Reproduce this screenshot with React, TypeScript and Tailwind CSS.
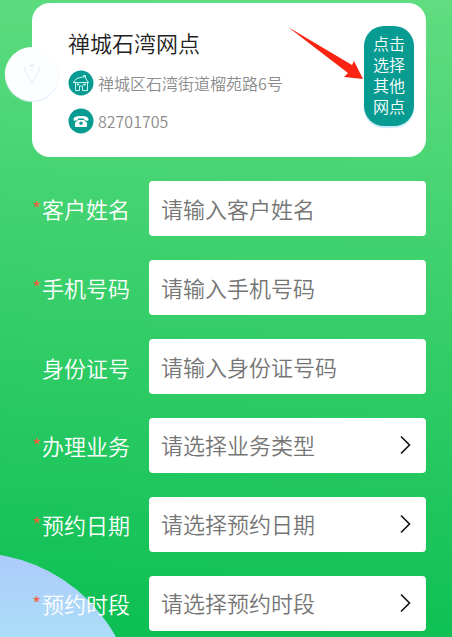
import React from 'react';

interface Field {
  id: string;
  label: string;
  placeholder: string;
  required: boolean;
  kind: 'text' | 'select';
}

const fields: Field[] = [
  { id: 'name', label: '客户姓名', placeholder: '请输入客户姓名', required: true, kind: 'text' },
  { id: 'phone', label: '手机号码', placeholder: '请输入手机号码', required: true, kind: 'text' },
  { id: 'idcard', label: '身份证号', placeholder: '请输入身份证号码', required: false, kind: 'text' },
  { id: 'business', label: '办理业务', placeholder: '请选择业务类型', required: true, kind: 'select' },
  { id: 'date', label: '预约日期', placeholder: '请选择预约日期', required: true, kind: 'select' },
  { id: 'period', label: '预约时段', placeholder: '请选择预约时段', required: true, kind: 'select' },
];

const HouseIcon: React.FC = () => (
  <svg viewBox="0 0 26 26" className="h-[26px] w-[26px] shrink-0" fill="none" aria-hidden="true">
    <circle cx="13" cy="13" r="12.5" fill="#079b91" />
    <g stroke="#c9f5ee" strokeWidth="1" strokeLinejoin="round" strokeLinecap="round">
      <path d="M5.5 12.5 8.500 8.500 16.500 6.500 20.500 12.500H5.500M15.500 6.500V5.500H17.500V7.500" />
      <path d="M7.500 12.500V20.500H11.500V16H14.500V20.500H19.500V12.500" />
      <path d="M9.500 14.500H10.500M16 14.500H17" strokeWidth="1.800" />
    </g>
  </svg>
);

const PhoneIcon: React.FC = () => (
  <svg viewBox="0 0 26 26" className="h-[26px] w-[26px] shrink-0" aria-hidden="true">
    <circle cx="13" cy="13" r="12.5" fill="#079b91" />
    <path
      d="M5.500 11.500c0-2 2-3.500 7.500-3.500s7.500 1.500 7.500 3.500c0 1-.5 1.300-1.200 1.200l-2.300-.4c-.7-.1-1-.5-1-1.200v-.6h-6v.6c0 .7-.3 1.100-1 1.200l-2.300.4c-.7.1-1.200-.2-1.200-1.200Z"
      fill="#fff"
    />
    <path d="M10 12h6l3 2.800V18c0 .6-.4 1-1 1H8c-.6 0-1-.4-1-1v-3.200Z" fill="#fff" />
    <circle cx="13" cy="15.300" r="1.700" fill="#079b91" />
  </svg>
);

const BranchCard: React.FC = () => (
  <section className="relative ml-8 mr-[26px] flex items-start justify-between rounded-[18px] bg-white py-[23px] pl-9 pr-3">
    {/* Круглый значок у левого края карточки */}
    <span className="absolute -left-[27px] top-11 flex h-[54px] w-[54px] items-center justify-center rounded-full bg-[#fdfeff] shadow-[0_1px_1px_#d9e8fb]">
      <svg viewBox="0 0 20 24" className="mt-1 h-6 w-5" fill="none" stroke="#dfebf8" aria-hidden="true">
        <path d="M2 2c0 6 5 11 8 18 3-7 8-12 8-18" />
        <path d="M8 2q2-1 4 0" strokeWidth="2" />
      </svg>
    </span>

    <div>
      <h1 className="text-[22px] leading-8 text-[#222]">禅城石湾网点</h1>
      <p className="mt-3 flex items-center gap-1 text-base leading-6 text-[#8c8c8c]">
        <HouseIcon />
        禅城区石湾街道榴苑路6号
      </p>
      <p className="mt-3 flex items-center gap-1 text-base leading-6 text-[#8c8c8c]">
        <PhoneIcon />
        82701705
      </p>
    </div>

    <button
      type="button"
      className="w-[50px] rounded-[20px] bg-[#079b91] px-[9px] pb-[9px] pt-[7px] text-base leading-[21px] text-white shadow-[0_2px_1px_#c5ecf7]"
    >
      点击选择其他网点
    </button>

    {/* Стрелка-подсказка поверх карточки */}
    <svg viewBox="0 0 78 56" className="absolute right-[62px] top-[22px] h-14 w-[78px]" aria-hidden="true">
      <path d="M2 2 66 40 68 36 77 54 58 52 62 48 28 22Z" fill="#fb2413" />
    </svg>
  </section>
);

const FieldRow: React.FC<{ field: Field }> = ({ field }) => (
  <div className="flex items-center">
    <label htmlFor={field.id} className="flex w-[117px] shrink-0 text-[22px] leading-[30px] text-white">
      <span className="w-[10px] text-xl leading-8 text-[#f0603c]">{field.required ? '*' : ''}</span>
      {field.label}
    </label>
    {field.kind === 'text' ? (
      <input
        id={field.id}
        type="text"
        placeholder={field.placeholder}
        className="h-[55px] min-w-0 flex-1 rounded bg-white px-3 pb-0.5 text-[22px] text-[#333] outline-none placeholder:text-[#757575]"
      />
    ) : (
      <div className="relative min-w-0 flex-1">
        <select
          id={field.id}
          defaultValue=""
          className="block h-[55px] w-full appearance-none rounded bg-white px-3 pb-0.5 text-[22px] text-[#757575] outline-none"
        >
          <option value="">{field.placeholder}</option>
        </select>
        <svg
          viewBox="0 0 12 20"
          className="pointer-events-none absolute right-[15px] top-[17px] h-5 w-3"
          fill="none"
          stroke="#111"
          strokeWidth="1.6"
          aria-hidden="true"
        >
          <path d="M2 1.500 10.500 10 2 18.500" />
        </svg>
      </div>
    )}
  </div>
);

const App: React.FC = () => (
  <main className="relative min-h-screen overflow-hidden bg-linear-[184deg,#60dd80,#0bbf52] pb-[6px] pt-[3px] font-['Noto_Sans_CJK_SC',sans-serif] font-[350]">
    {/* Декоративный круг с тонкими волнами */}
    <div className="absolute -bottom-60 -left-[188px] h-[324px] w-[324px] rounded-full bg-[repeating-radial-gradient(ellipse_at_30%_50%,#ffffff18_0px,#ffffff00_2px,#ffffff18_4px),linear-gradient(#a8c8fb,#a8dcf8_26%)]" />
    <BranchCard />
    <form className="relative ml-8 mr-[26px] mt-6 flex flex-col gap-6">
      {fields.map((field) => (
        <FieldRow key={field.id} field={field} />
      ))}
    </form>
  </main>
);

export default App;
